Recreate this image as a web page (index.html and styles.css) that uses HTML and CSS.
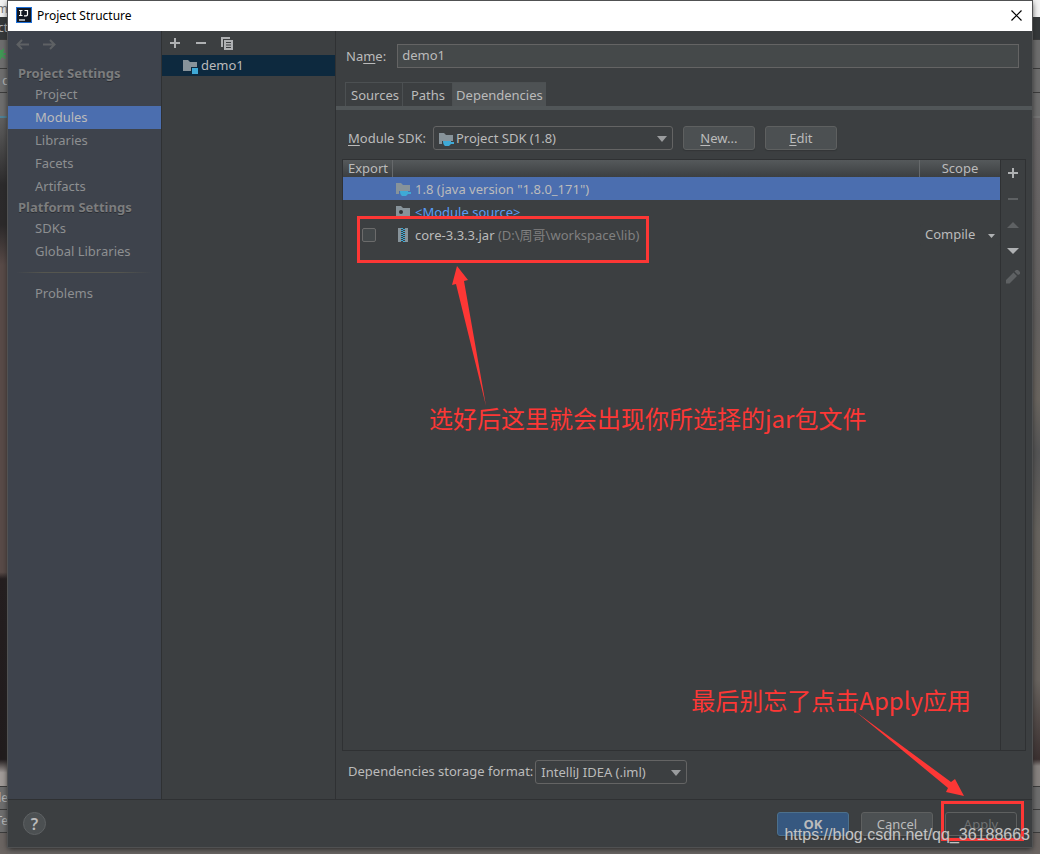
FILE: index.html
```html
<!DOCTYPE html>
<html lang="en">
<head>
<meta charset="utf-8">
<title>Project Structure</title>
<link rel="stylesheet" href="styles.css">
</head>
<body>
<svg class="defs" width="0" height="0" aria-hidden="true">
  <symbol id="jdk" viewBox="0 0 16 16">
    <path d="M1 2h5l2 2h7v6H4v3H1z" fill="#87939a"/>
    <path d="M5 10h8v1h3v2h-3l-2 2H7c-1.500-1-2-3-2-5z" fill="#3fa9d6"/>
  </symbol>
</svg>
<div class="desktop">
  <div class="under under-left" aria-hidden="true">
    <div class="strip s-menu">m</div>
    <div class="strip s-nav">ct</div>
    <div class="strip s-run"><svg width="8" height="16" viewBox="0 0 8 16"><path d="M0 4h2l2-2v3l-1 2h3v2H3l3 3-1 1-3-2-2 3z" fill="#419955"/></svg></div>
    <div class="strip s-bar">l&nbsp;c</div>
    <div class="strip s-tab"></div>
    <div class="photo photo-left"></div>
    <div class="strip s-row">le</div>
    <div class="strip s-row">Te</div>
    <div class="strip s-end"></div>
  </div>
  <main class="dialog">
    <header class="titlebar">
      <svg class="logo" width="16" height="16" viewBox="0 0 16 16"><rect x=".5" y=".5" width="15" height="15" fill="#111722" stroke="#1d6fd8"/><path d="M3 3.500h3.500M4.700 3.500v5M3 8.500h3.500M8.500 3.500h3v4q0 1.300-1.300 1.300H8" fill="none" stroke="#fff" stroke-width="1.200"/><path d="M3 13h6" stroke="#fff" stroke-width="1.200"/></svg>
      <h1>Project Structure</h1>
      <button class="close" aria-label="Close"><svg width="11" height="11" viewBox="0 0 11 11"><path d="M.5.5l10 10M10.500.5l-10 10" stroke="#000" stroke-width="1.200"/></svg></button>
    </header>
    <div class="panes">
      <nav class="sidebar">
        <div class="history">
          <button aria-label="Back"><svg width="13" height="11" viewBox="0 0 13 11"><path d="M13 5.500H1.500M6 1L1.500 5.500 6 10" fill="none" stroke="#5e6164" stroke-width="2"/></svg></button>
          <button aria-label="Forward"><svg width="13" height="11" viewBox="0 0 13 11"><path d="M0 5.500h11.500M7 1l4.500 4.500L7 10" fill="none" stroke="#5e6164" stroke-width="2"/></svg></button>
        </div>
        <h2>Project Settings</h2>
        <a href="#">Project</a>
        <a href="#" class="current">Modules</a>
        <a href="#">Libraries</a>
        <a href="#">Facets</a>
        <a href="#">Artifacts</a>
        <h2>Platform Settings</h2>
        <a href="#">SDKs</a>
        <a href="#">Global Libraries</a>
        <hr>
        <a href="#">Problems</a>
      </nav>
      <section class="modules">
        <div class="tools">
          <button aria-label="Add"><svg width="10" height="10" viewBox="0 0 10 10"><path d="M5 0v10M0 5h10" stroke="#afb1b3" stroke-width="2"/></svg></button>
          <button aria-label="Remove"><svg width="10" height="10" viewBox="0 0 10 10"><path d="M0 5h10" stroke="#afb1b3" stroke-width="2"/></svg></button>
          <button aria-label="Copy"><svg width="12" height="13" viewBox="0 0 12 13"><path d="M0 0h9v2H2v8H0z" fill="#afb1b3"/><path d="M3 3h9v10H3z" fill="#afb1b3"/><path d="M5 5.500h5M5 8h5M5 10.500h5" stroke="#3c3f41"/></svg></button>
        </div>
        <div class="module"><svg width="16" height="16" viewBox="0 0 16 16"><path d="M1 2h5l2 2h7v5H9v4H1z" fill="#87939a"/><path d="M10 10h6v6h-6z" fill="#3fa9d6"/></svg><span>demo1</span></div>
      </section>
      <section class="editor">
        <div class="name-row">
          <label for="name">Na<u>m</u>e:</label>
          <input id="name" type="text" value="demo1">
        </div>
        <div class="tabs">
          <button>Sources</button><button>Paths</button><button class="active">Dependencies</button>
        </div>
        <div class="sdk-row">
          <label for="sdk"><u>M</u>odule SDK:</label>
          <div class="picker sdk-picker">
            <svg class="lead" width="16" height="16"><use href="#jdk"/></svg>
            <select id="sdk"><option>Project SDK (1.8)</option></select>
            <svg class="caret" width="10" height="6"><path d="M0 0h10L5 6z" fill="#9a9c9e"/></svg>
          </div>
          <button class="btn"><u>N</u>ew...</button>
          <button class="btn"><u>E</u>dit</button>
        </div>
        <div class="deps">
          <div class="table-wrap">
            <table>
              <colgroup><col class="c-export"><col><col class="c-scope"></colgroup>
              <thead><tr><th>Export</th><th></th><th class="scope">Scope</th></tr></thead>
              <tbody>
                <tr class="selected"><td></td><td><div class="entry"><svg width="16" height="16"><use href="#jdk"/></svg><span>1.8 (java version "1.8.0_171")</span></div></td><td></td></tr>
                <tr><td></td><td><div class="entry"><svg width="16" height="16" viewBox="0 0 16 16"><path d="M1 2h5l2 2h7v9H1z" fill="#87939a"/><circle cx="6" cy="8" r="2" fill="#303335"/></svg><span class="source">&lt;Module source&gt;</span></div></td><td></td></tr>
                <tr><td><input type="checkbox" aria-label="Export core-3.3.3.jar"></td><td><div class="entry"><svg width="16" height="16" viewBox="0 0 16 16"><path d="M3 1h3v14H3zM10 1h3v14h-3z" fill="#87939a"/><path d="M7 1v14M9 2v13" stroke="#3fa9d6" stroke-width="2" stroke-dasharray="1 1"/></svg><span class="jar">core-3.3.3.jar <small>(D:\周哥\workspace\lib)</small></span></div></td>
                <td><div class="picker scope-picker"><select aria-label="Scope"><option>Compile</option></select><svg class="caret" width="7" height="4"><path d="M0 0h7L3.500 4z" fill="#afb1b3"/></svg></div></td></tr>
              </tbody>
            </table>
          </div>
          <div class="side-tools">
            <button aria-label="Add dependency"><svg width="10" height="10" viewBox="0 0 10 10"><path d="M5 0v10M0 5h10" stroke="#afb1b3" stroke-width="2"/></svg></button>
            <button aria-label="Remove dependency"><svg width="10" height="10" viewBox="0 0 10 10"><path d="M0 5h10" stroke="#5e6163" stroke-width="2"/></svg></button>
            <button aria-label="Move up"><svg width="12" height="6"><path d="M0 6h12L6 0z" fill="#5e6163"/></svg></button>
            <button aria-label="Move down"><svg width="12" height="6"><path d="M0 0h12L6 6z" fill="#afb1b3"/></svg></button>
            <button aria-label="Edit dependency"><svg width="14" height="14" viewBox="0 0 14 14"><path d="M0 10l7.500-7.500 3.500 3.500L3.500 13.500H0zM8.500 1.500L10 0h2l2 2v2l-2 1z" fill="#5e6163"/></svg></button>
          </div>
        </div>
        <div class="format-row">
          <label for="format">Dependencies storage format:</label>
          <div class="picker format-picker">
            <select id="format"><option>IntelliJ IDEA (.iml)</option></select>
            <svg class="caret" width="10" height="6"><path d="M0 0h10L5 6z" fill="#9a9c9e"/></svg>
          </div>
        </div>
      </section>
    </div>
    <footer class="actions">
      <button class="help" aria-label="Help">?</button>
      <button class="btn primary">OK</button>
      <button class="btn">Cancel</button>
      <button class="btn" disabled>Apply</button>
    </footer>
    <div class="mark mark-jar"></div>
    <svg class="mark-arrow-jar" width="40" height="145" viewBox="0 0 40 145"><path d="M9 1L20 15l-4 1 22 125L8 19l-4 1z" fill="#fd3735"/></svg>
    <p class="note note-jar">选好后这里就会出现你所选择的jar包文件</p>
    <p class="note note-apply">最后别忘了点击Apply应用</p>
    <svg class="mark-arrow-apply" width="110" height="90" viewBox="0 0 110 90"><path d="M1 1l95 70 4-3 9 17-18-4 2-4z" fill="#fd3735"/></svg>
    <div class="mark mark-apply"></div>
    <p class="watermark">https://blog.csdn.net/qq_36188663</p>
  </main>
  <div class="under under-right" aria-hidden="true">
    <div class="strip s-menu"></div>
    <div class="strip s-nav"></div>
    <div class="strip s-run"></div>
    <div class="strip s-bar"></div>
    <div class="strip s-tab"></div>
    <div class="photo photo-right"></div>
    <div class="strip s-row"></div>
    <div class="strip s-row"></div>
    <div class="strip s-end"></div>
  </div>
</div>
</body>
</html>
```
FILE: styles.css
```css
* { box-sizing: border-box; }
body {
  margin: 0;
  background: #6a6664;
  color: #bbbbbb;
  font: 13px/20px "Noto Sans", "Noto Sans CJK SC", sans-serif;
}
h1, h2, p { margin: 0; }
button, input, select { font: inherit; color: inherit; margin: 0; }
button { padding: 0; border: 0; background: none; }
svg { display: block; flex: none; }
.defs { position: absolute; }
a { color: inherit; text-decoration: none; }
u { text-underline-offset: 2px; }

.desktop {
  display: grid;
  grid-template-columns: 8px minmax(0, 1fr) 8px;
  min-height: 100vh;
  overflow: hidden;
}

/* windows behind the dialog */
.under { display: flex; flex-direction: column; overflow: hidden; font-size: 12px; }
.strip { flex: none; display: flex; align-items: center; justify-content: flex-end; overflow: hidden; border-bottom: 1px solid #3c3c3c; background: #6e6e6e; color: #b8b8b8; white-space: nowrap; }
.s-menu { height: 17px; background: #f2f2f2; color: #777777; border: 0; }
.s-nav { height: 23px; background: #35383a; }
.s-run { height: 29px; }
.s-bar { height: 24px; }
.s-tab { height: 25px; border-bottom: 2px solid #4f8296; }
.under-right .s-tab { border-color: #777777; }
.s-row { height: 23px; }
.s-end { height: 21px; background: #6b6562; border: 0; }
.photo { flex: 1; border-bottom: 1px solid #3c3c3c; }
.photo-left { background: linear-gradient(#606060, #2c2b2c 10%, #2c2a2b 16%, #594b48 22%, #594b48 68%, #251f20 69%, #211c1d 96%, #a19b98 98%); }
.photo-right { background: linear-gradient(#6b6869, #646160 30%, #6a655f 42%, #555556 50%, #68645f 62%, #6a6560 84%, #3c3131 96%, #888380 97%); }

.dialog {
  position: relative;
  display: flex;
  flex-direction: column;
  margin: 1px 0 7px;
  background: #3c3f41;
  box-shadow: 0 0 0 1px #505152, 0 2px 6px #222222;
}
.titlebar { display: flex; align-items: center; height: 30px; padding: 0 10px 2px 8px; background: #ffffff; color: #000000; }
.titlebar h1 { flex: 1; padding: 1px 0 0 5px; font-size: 12px; font-weight: 400; }
.close { padding: 0; }

.panes { flex: 1; display: grid; grid-template-columns: 154px 174px minmax(0, 1fr); border-bottom: 1px solid #2f3133; }

.sidebar { display: flex; flex-direction: column; background: #3e434c; border-right: 1px solid #2f3133; color: #8d8f91; }
.history { display: flex; align-items: flex-start; gap: 14px; padding: 8px; height: 32px; }
.sidebar h2 { padding-left: 10px; font-size: 13px; line-height: 20px; color: #7c7d7e; text-shadow: 0 1px #2b2e33; }
.sidebar a { padding-left: 27px; line-height: 23px; }
.sidebar a + h2 { line-height: 19px; }
.sidebar .current { background: #4b6eaf; color: #bbbbbb; }
.sidebar hr { width: 136px; height: 1px; margin: 9px 8px; border: 0; background: linear-gradient(90deg, transparent, #55564f 20%, #55564f 75%, transparent); }

.modules { border-right: 1px solid #2f3133; }
.tools { display: flex; align-items: center; gap: 16px; height: 24px; padding-left: 8px; }
.tools button:last-child { margin-left: -1px; }
.module { display: flex; align-items: center; height: 21px; padding-left: 20px; gap: 3px; background: #0d293e; }
.module span { line-height: 18px; padding-bottom: 2px; }

.editor { display: flex; flex-direction: column; min-width: 0; }
.name-row { display: flex; align-items: center; gap: 11px; padding: 13px 13px 14px 10px; }
.name-row label { padding-bottom: 1px; }
.name-row input { flex: 1; min-width: 0; height: 24px; padding: 0 4px 2px; border: 1px solid #646464; background: #45494a; }
.tabs { display: flex; height: 28px; padding-left: 9px; border-bottom: 4px solid #515658; }
.tabs button { padding: 0 3px; border: 1px solid #4c5052; border-width: 1px 0 0 1px; }
.tabs button:first-child { padding-left: 5px; }
.tabs button:nth-child(2) { padding: 0 7px 0 8px; }
.tabs .active { background: #4e5254; }

.sdk-row { display: flex; align-items: center; padding: 16px 12px 8px; }
.btn { width: 72px; height: 24px; border: 1px solid #5e6060; border-radius: 3px; background: #4c5052; box-shadow: 0 1px 1px #333638; }
.sdk-row .btn { margin-left: 10px; }
.picker { position: relative; }
.picker select { width: 100%; height: 24px; padding: 0 5px 1px; border: 1px solid #646464; border-radius: 3px; background: #3c3f41; appearance: none; }
.caret { position: absolute; right: 6px; top: 10px; pointer-events: none; }
.lead { position: absolute; left: 5px; top: 5px; pointer-events: none; }
.sdk-picker { width: 240px; margin-left: 7px; }
.picker #sdk { padding-left: 22px; }

.deps { flex: 1; display: flex; margin: 1px 6px 0; border: 1px solid #2f3133; }
.table-wrap { flex: 1; min-width: 0; }
table { width: 100%; table-layout: fixed; border-spacing: 0; }
.c-export { width: 50px; }
.c-scope { width: 80px; }
th { height: 17px; padding: 0 0 0 5px; border-right: 1px solid #66696b; background: linear-gradient(#55595b, #3c3f41); font-weight: 400; line-height: 17px; text-align: left; }
th.scope { border-right: 0; padding: 0; text-align: center; }
td { height: 23px; padding: 0; line-height: 20px; }
.selected { background: #4b6eaf; }
.entry { display: flex; align-items: center; gap: 4px; padding-left: 2px; }
.source { color: #589df6; }
.jar small { font-size: 13px; color: #808080; }
td input { display: block; width: 14px; height: 14px; margin: 0 19px; appearance: none; border: 1px solid #6b6b6b; border-radius: 2px; background: #43484a; }
.scope-picker select { display: block; border: 0; height: 22px; }
.scope-picker .caret { right: 5px; }
.side-tools { display: flex; flex-direction: column; width: 25px; border-left: 1px solid #2f3133; }
.side-tools button { display: grid; place-items: center; height: 26px; }

.format-row { display: flex; align-items: center; gap: 2px; padding: 9px 12px 15px; }
.format-row label { padding-bottom: 3px; }
.format-picker { width: 152px; }

.actions { display: flex; align-items: center; gap: 12px; height: 47px; padding: 0 15px; }
.help { width: 23px; height: 23px; margin-right: auto; border: 1px solid #5e6163; border-radius: 50%; background: #4c5052; font-size: 16px; font-weight: 600; line-height: 20px; }
.primary { background: #365880; border-color: #4c708c; font-weight: 700; }
.btn:disabled { background: #3c3f41; color: #6f7172; }

/* annotations over the dialog */
.mark { position: absolute; border: 3px solid #fd3735; pointer-events: none; }
.mark-jar { left: 349px; top: 215px; width: 292px; height: 47px; }
.mark-apply { right: 8px; bottom: 6px; width: 83px; height: 40px; }
.mark-arrow-jar { position: absolute; left: 440px; top: 264px; }
.mark-arrow-apply { position: absolute; right: 67px; bottom: 46px; }
.note { position: absolute; color: #fd3735; font: 24px/32px "Noto Sans CJK SC", sans-serif; white-space: nowrap; }
.note-jar { left: 421px; top: 401px; }
.note-apply { right: 61px; bottom: 131px; }
.watermark { position: absolute; right: 2px; bottom: 2px; color: #d2d2d2; font: 16px/20px "Liberation Sans", sans-serif; text-shadow: 0 0 1px #555555; opacity: 0.9; }
```
